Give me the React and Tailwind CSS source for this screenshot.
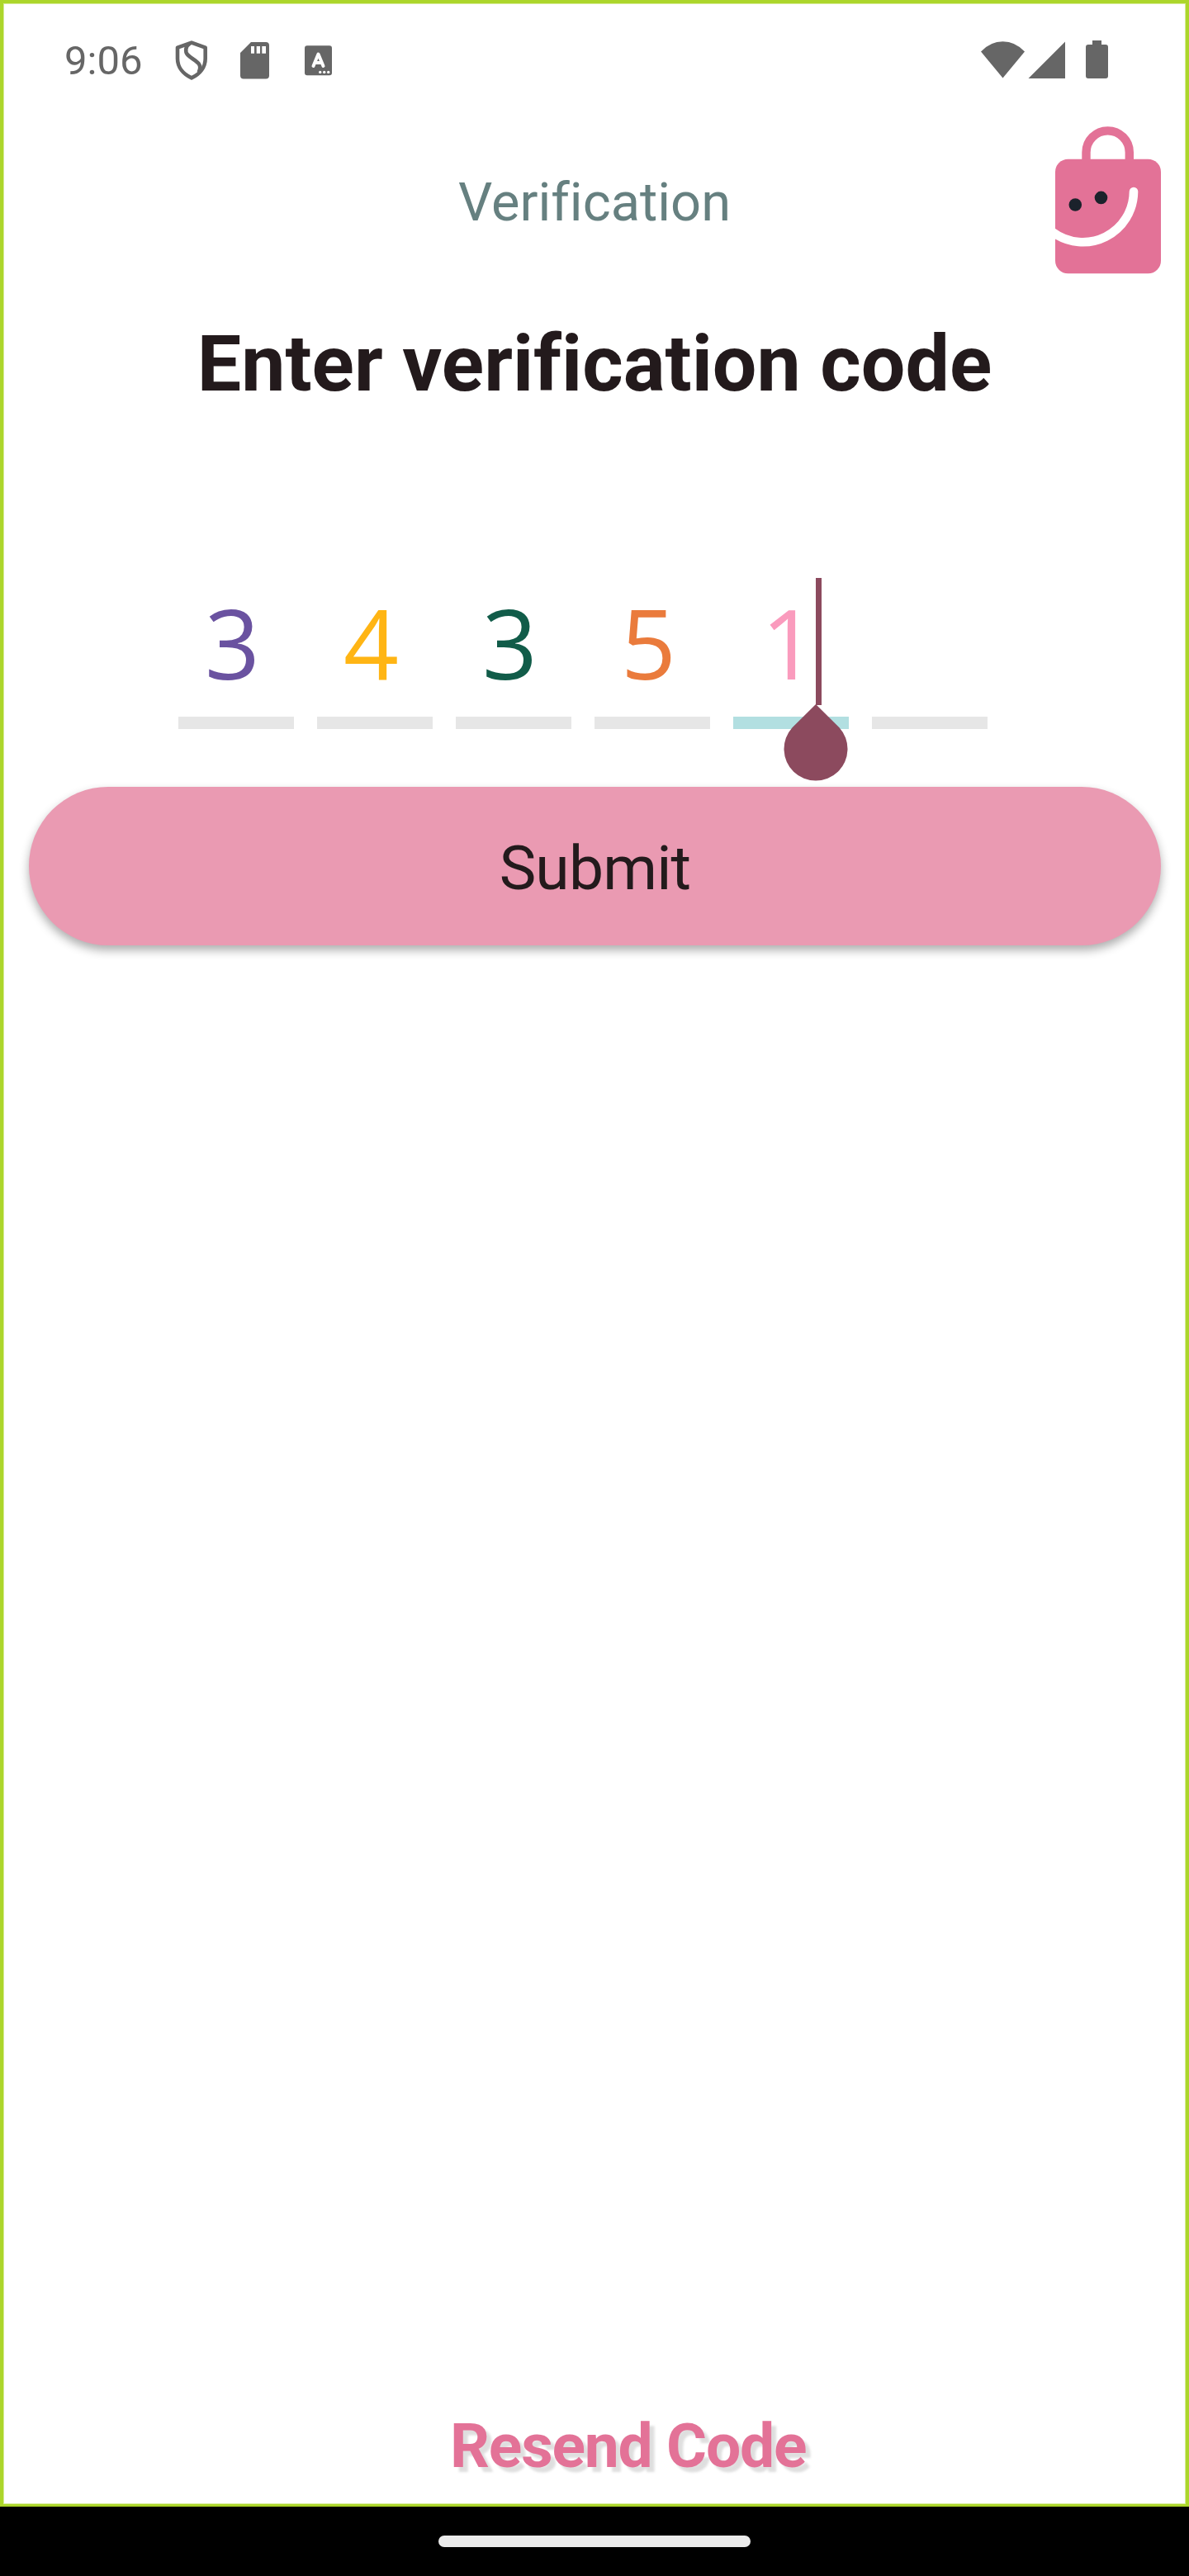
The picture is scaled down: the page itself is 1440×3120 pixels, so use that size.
const DIGITS = [
  { value: "3", color: "text-[#6a52a0]", line: "bg-[#e6e6e6]" },
  { value: "4", color: "text-[#ffb514]", line: "bg-[#e6e6e6]" },
  { value: "3", color: "text-[#115c49]", line: "bg-[#e6e6e6]" },
  { value: "5", color: "text-[#ea7b3c]", line: "bg-[#e6e6e6]" },
  { value: "1", color: "pl-[4px] text-[#fa9bbd]", line: "bg-[#b2dfe1]", active: true },
  { value: "", color: "", line: "bg-[#e6e6e6]" },
];

function StatusBar() {
  return (
    <div className="flex h-[140px] items-start justify-between pt-[45px] pr-[94px] pl-[74px] text-[#666666]">
      <div className="flex">
        <span className="w-[134px] pt-[1px] text-[49px] leading-[48px]">9:06</span>
        <svg width="40" height="48" viewBox="0 0 40 48" fill="none" stroke="currentColor" strokeWidth="4.6" strokeLinejoin="round">
          <path d="M20 2.6 36.7 8.6V22C36.7 32.5 30 40.8 20 45.4 10 40.8 3 32.5 3 22V8.6Z" />
          <path d="M18 3.6C12.5 7 11.8 13.500 15.300 17.400C19 21.500 25.500 24 28.700 28.200C31 31.300 30.800 34.500 28.600 38.500" />
        </svg>
        <svg className="ml-[39px]" width="35" height="48" viewBox="0 0 35 48" fill="currentColor">
          <path
            fillRule="evenodd"
            d="M13 2H31Q35 2 35 6V42.500Q35 46.500 31 46.500H4Q0 46.500 0 42.500V15ZM13 7V15.700H17V7ZM19.700 7V15.700H24V7ZM26.300 7V15.700H31V7Z"
          />
        </svg>
        <svg className="ml-[43px]" width="33" height="48" viewBox="0 0 33 48">
          <rect y="6.200" width="33" height="36" rx="3" fill="currentColor" />
          <path d="M10.500 31 16.500 16.500 22.500 31M13 27H20" fill="none" stroke="#fff" strokeWidth="4" strokeLinecap="round" strokeLinejoin="round" />
          <g fill="#fff">
            <circle cx="18.700" cy="38.400" r="1.700" />
            <circle cx="23.700" cy="38.400" r="1.700" />
            <circle cx="28.700" cy="38.400" r="1.700" />
          </g>
        </svg>
      </div>
      <div className="flex">
        <svg width="53" height="48" viewBox="0 0 53 48" fill="currentColor">
          <path d="M0 13.500Q11.500 1.300 26.500 1.300T53 13.500L26.500 45.500Z" />
        </svg>
        <svg className="ml-[4px]" width="45" height="48" viewBox="0 0 45 48" fill="currentColor">
          <path d="M45 1.500V46H0.500Z" />
        </svg>
        <svg className="ml-[25px]" width="27" height="48" viewBox="0 0 27 48" fill="currentColor">
          <path d="M8 0H19V5H24Q27 5 27 8V43Q27 46 24 46H3Q0 46 0 43V8Q0 5 3 5H8Z" />
        </svg>
      </div>
    </div>
  );
}

function BagLogo() {
  return (
    <svg width="128" height="180" viewBox="0 0 128 180" fill="none">
      <path d="M37.500 45V32.500a26 26 0 0 1 52.300 0V45" stroke="#e37297" strokeWidth="10.400" />
      <rect y="40.800" width="128" height="138.500" rx="15.500" fill="#e37297" />
      <path d="M-3 129.200A61.500 61.500 0 0 0 95 80" stroke="#fff" strokeWidth="10.600" strokeLinecap="round" />
      <circle cx="24.300" cy="96" r="7.800" fill="#1b222b" />
      <circle cx="55.500" cy="87.400" r="7.800" fill="#1b222b" />
    </svg>
  );
}

function Caret() {
  return (
    <div className="absolute top-0 left-[60px] h-[250px] w-[80px]">
      <div className="ml-[40px] h-[154px] w-[7px] bg-[#8c4a5e]" />
      <svg className="relative -top-px left-[1px]" width="78" height="94" viewBox="0 0 78 94" fill="#8c4a5e">
        <path d="M39 0 67.500 28.200A38.500 38.500 0 1 1 10.500 28.200Z" />
      </svg>
    </div>
  );
}

function CodeInput() {
  return (
    <div className="flex gap-[28px] pl-[212px] font-['Open_Sans',sans-serif]">
      {DIGITS.map((d, i) => (
        <div key={i} className="relative flex h-[183px] w-[140px] flex-col justify-between pt-[19px]">
          <span className={`pr-[9px] text-center text-[117px] leading-none ${d.color}`}>{d.value}</span>
          <div className={`mt-auto h-[15px] ${d.line}`} />
          {d.active && <Caret />}
        </div>
      ))}
    </div>
  );
}

export default function App() {
  return (
    <div className="flex h-[3120px] w-[1440px] flex-col overflow-hidden bg-black font-['Roboto',sans-serif] [font-variant-ligatures:none]">
      <main className="flex h-[3036px] flex-col border-4 border-b-3 border-[#acd62b] bg-white shadow-[inset_0_0_0_1px_#d5eb95]">
        <StatusBar />
        <header className="grid h-[188px] grid-cols-[1fr_auto_1fr] pt-[8px] pr-[30px] pl-[30px]">
          <div />
          <h1 className="pt-[61px] text-[65px] leading-none whitespace-nowrap text-[#668080]">Verification</h1>
          <div className="flex justify-end">
            <BagLogo />
          </div>
        </header>
        <h2 className="mt-[61px] text-center text-[95px] leading-none font-bold whitespace-nowrap text-[#231a1c]">Enter verification code</h2>
        <div className="mt-[212px]">
          <CodeInput />
        </div>
        <button className="mt-[70px] mr-[30px] ml-[31px] h-[192px] shrink-0 rounded-full bg-[#ea9ab2] pt-[4px] text-[75px] leading-none tracking-[-0.8px] text-[#231a1c] shadow-[0_6px_12px_rgba(0,0,0,0.32)]">
          Submit
        </button>
        <div className="mt-auto flex h-[108px] pl-[541px]">
          <span className="text-[75px] leading-none font-bold tracking-[-1.2px] whitespace-nowrap text-[#e37297] [text-shadow:6px_6px_3px_rgba(0,0,0,0.13)]">
            Resend Code
          </span>
        </div>
      </main>
      <div className="flex h-[84px] justify-center pt-[35px]">
        <div className="h-[14px] w-[378px] rounded-full bg-[#ebebeb]" />
      </div>
    </div>
  );
}
